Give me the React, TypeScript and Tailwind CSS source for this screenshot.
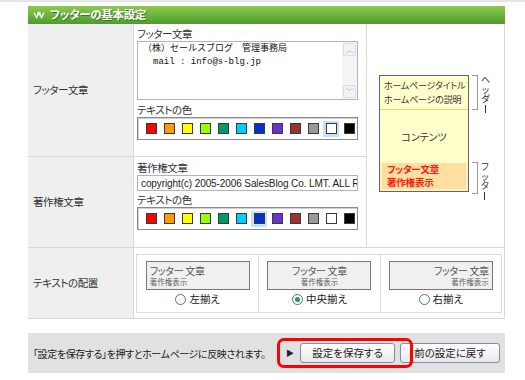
import React from 'react';

const jp = "font-['Noto_Sans_CJK_JP','Noto_Sans',sans-serif] [font-feature-settings:'palt']";

const COLORS = [
    '#ff0000',
    '#ff9900',
    '#ffff00',
    '#99ff00',
    '#009966',
    '#00ccff',
    '#0033cc',
    '#6633cc',
    '#993333',
    '#999999',
    '#ffffff',
    '#000000',
];

const Palette = ({ selected }: { selected: number }) => (
    <div className="mt-[1px] flex h-[23px] w-[221px] items-center gap-[2px] border border-[#8a8a8a] pl-[5px] shadow-[inset_1px_1px_0_#d0d0d0]">
        {COLORS.map((c, i) => (
            <div
                key={c}
                className={`flex h-[16px] w-[16px] items-center justify-center ${i === selected ? 'bg-[#c3e1fa]' : ''}`}
            >
                <div className="h-[11px] w-[11px] border border-[#3a3a3a]" style={{ backgroundColor: c }} />
            </div>
        ))}
    </div>
);

const HeaderIcon = () => (
    <svg width="12" height="9" viewBox="0 0 12 9" className="shrink-0">
        <path d="M1 1.5 L3.5 6.5 L6 1.5 L8.5 6.5 L11 1.5" fill="none" stroke="#fff" strokeWidth="1.4" />
        <path d="M4.5 1.5 L6 4 L7.5 1.5" fill="none" stroke="#fff" strokeWidth="1.1" />
    </svg>
);

// vertical caption next to the preview: chars stacked, long vowel mark drawn upright
const VerticalText = ({ chars }: { chars: string[] }) => (
    <div className="ml-[3px] flex flex-col items-center text-[9px] leading-[9.5px] text-[#333]">
        {chars.map((ch, i) =>
            ch === 'ー' ? (
                <span key={i} className="mt-[1px] h-[8px] w-[1px] shrink-0 bg-[#333]" />
            ) : (
                <span key={i} className="h-[9.5px] shrink-0">
                    {ch}
                </span>
            ),
        )}
    </div>
);

const AlignOption = ({
    label,
    align,
    checked,
    first,
}: {
    label: string;
    align: 'left' | 'center' | 'right';
    checked: boolean;
    first?: boolean;
}) => {
    const alignClass = align === 'left' ? 'items-start' : align === 'center' ? 'items-center' : 'items-end';
    return (
        <div className={`flex flex-col items-center pt-[6px] ${first ? '' : 'border-l border-[#dcdcdc]'}`}>
            <div
                className={`flex h-[29px] w-[104px] flex-col justify-center border border-[#777] bg-[#f0f0f0] px-[3px] ${alignClass}`}
            >
                <span className="text-[10px] leading-[12px] tracking-[-0.3px] text-[#555]">フッター 文章</span>
                <span className="text-[7.5px] leading-[10px] text-[#666]">著作権表示</span>
            </div>
            <div className="mt-[2px] flex items-center gap-[3px]">
                <span className="flex h-[11px] w-[11px] items-center justify-center rounded-full border border-[#4d6f9c] bg-white">
                    {checked && <span className="h-[5px] w-[5px] rounded-full bg-[#2f9a3a]" />}
                </span>
                <span className="text-[10.5px] leading-[14px] text-[#222]">{label}</span>
            </div>
        </div>
    );
};

const Button = ({ children, width }: { children: React.ReactNode; width: number }) => (
    <div
        className="flex h-[20px] items-center justify-center rounded-[3px] border border-[#7c90ae] bg-gradient-to-b from-[#ffffff] to-[#e8e8e8] text-[10.5px] text-[#222]"
        style={{ width }}
    >
        {children}
    </div>
);

export default function App() {
    return (
        <div className={`h-[380px] w-[525px] overflow-hidden bg-white ${jp}`}>
            <div className="h-[2px] bg-[#e6e6e6]" />
            <div className="ml-[28px] mt-[4px] w-[477px]">
                <div className="flex h-[18px] items-center gap-[5px] bg-gradient-to-b from-[#8ccb4e] to-[#4e9c2e] pl-[5px]">
                    <HeaderIcon />
                    <span className="text-[11.5px] font-bold leading-none tracking-[-0.3px] text-white [text-shadow:1px_1px_0_#3d7a22]">
                        フッターの基本設定
                    </span>
                </div>

                <div className="grid grid-cols-[105px_233px_139px] grid-rows-[133px_91px_71px] text-[#333]">
                    <div className="flex items-center border-b border-[#d8d8d8] bg-[#efefef] pl-[5px] text-[10.5px] tracking-[-0.4px]">
                        フッター文章
                    </div>
                    <div className="border-b border-l border-[#d8d8d8] pl-[3px] pt-[4px]">
                        <div className="text-[10.5px] leading-[12px] tracking-[-0.4px]">フッター文章</div>
                        <div className="mt-[1px] flex h-[59px] w-[221px] border border-[#a6b6cc] bg-white">
                            <div className="flex-1 pl-[5px] pt-[1px] font-['Liberation_Mono','Noto_Sans_CJK_JP',monospace] text-[9px] leading-[13px] text-[#111] [font-feature-settings:normal]">
                                <div>（株）セールスブログ　管理事務局</div>
                                <div className="pl-[10px]">mail : info@s-blg.jp</div>
                            </div>
                            <div className="flex w-[15px] flex-col justify-between bg-[#f4f4f4] p-[1px]">
                                <div className="flex h-[13px] items-center justify-center rounded-[2px] border border-[#d8dde5] bg-[#f0f2f5] text-[7px] text-[#aab]">
                                    ︿
                                </div>
                                <div className="flex h-[13px] items-center justify-center rounded-[2px] border border-[#d8dde5] bg-[#f0f2f5] text-[7px] text-[#aab]">
                                    ﹀
                                </div>
                            </div>
                        </div>
                        <div className="mt-[4px] text-[10.5px] leading-[12px] tracking-[-0.4px]">テキストの色</div>
                        <Palette selected={10} />
                    </div>
                    <div className="row-span-2 border-x border-b border-[#d8d8d8] pl-[12px] pt-[51px]">
                        <div className="flex">
                            <div className="flex h-[117px] w-[90px] flex-col border border-[#666] bg-[#ffffcc]">
                                <div className="h-[34px] whitespace-nowrap border-b border-[#dede70] pl-[4px] pt-[3px] text-[9px] leading-[14px] tracking-[-0.2px] text-[#333]">
                                    <div>ホームページタイトル</div>
                                    <div>ホームページの説明</div>
                                </div>
                                <div className="flex h-[53px] items-center justify-center text-[10px] text-[#333]">
                                    コンテンツ
                                </div>
                                <div className="flex flex-1 flex-col justify-center whitespace-nowrap border-x-2 border-b-2 border-[#fff0c4] bg-[#ffdf9e] pl-[5px] text-[9.5px] font-bold leading-[13px] tracking-[-0.2px] text-[#ff1a1a]">
                                    <div>フッター文章</div>
                                    <div>著作権表示</div>
                                </div>
                            </div>
                            <div className="ml-[3px] flex flex-col">
                                <div className="flex h-[35px]">
                                    <div className="h-[35px] w-[6px] border-y border-r border-[#9a9a9a]" />
                                    <VerticalText chars={['ヘ', 'ッ', 'ダ', 'ー']} />
                                </div>
                                <div className="h-[52px]" />
                                <div className="flex h-[32px]">
                                    <div className="h-[32px] w-[6px] border-y border-r border-[#9a9a9a]" />
                                    <VerticalText chars={['フ', 'ッ', 'タ', 'ー']} />
                                </div>
                            </div>
                        </div>
                    </div>

                    <div className="flex items-center border-b border-[#d8d8d8] bg-[#efefef] pl-[5px] text-[10.5px] tracking-[-0.4px]">
                        著作権文章
                    </div>
                    <div className="border-b border-l border-[#d8d8d8] pl-[3px] pt-[5px]">
                        <div className="text-[10.5px] leading-[12px] tracking-[-0.4px]">著作権文章</div>
                        <div className="mt-[1px] flex h-[16px] w-[221px] items-center overflow-hidden whitespace-nowrap border border-[#a6b6cc] pl-[3px] font-['Liberation_Sans',sans-serif] text-[10px] tracking-[-0.1px] text-[#222]">
                            copyright(c) 2005-2006 SalesBlog Co. LMT. ALL Rights Reserved.
                        </div>
                        <div className="mt-[3px] text-[10.5px] leading-[12px] tracking-[-0.4px]">テキストの色</div>
                        <Palette selected={6} />
                    </div>

                    <div className="flex items-center border-b border-[#d8d8d8] bg-[#efefef] pl-[5px] text-[10.5px] tracking-[-0.4px]">
                        テキストの配置
                    </div>
                    <div className="col-span-2 border-x border-b border-[#d8d8d8] pb-[5px] pl-[2px] pr-[2px] pt-[6px]">
                        <div className="grid h-full grid-cols-3 border border-[#dcdcdc]">
                            <AlignOption label="左揃え" align="left" checked={false} first />
                            <AlignOption label="中央揃え" align="center" checked />
                            <AlignOption label="右揃え" align="right" checked={false} />
                        </div>
                    </div>
                </div>

                <div className="mt-[14px] flex h-[40px] items-center justify-between bg-[#e1e1e1] pl-[5px] pr-[5px]">
                    <span className="whitespace-nowrap text-[10px] tracking-[-0.4px] text-[#222]">
                        「設定を保存する」を押すとホームページに反映されます。
                    </span>
                    <div className="flex items-center">
                        <span className="mr-[6px] text-[8px] text-[#222]">▶</span>
                        <div className="relative">
                            <Button width={95}>設定を保存する</Button>
                            <div className="absolute -left-[23px] -top-[5px] h-[30px] w-[136px] rounded-[7px] border-[3px] border-[#ff0000]" />
                        </div>
                        <div className="ml-[5px]">
                            <Button width={100}>前の設定に戻す</Button>
                        </div>
                    </div>
                </div>
            </div>
        </div>
    );
}
